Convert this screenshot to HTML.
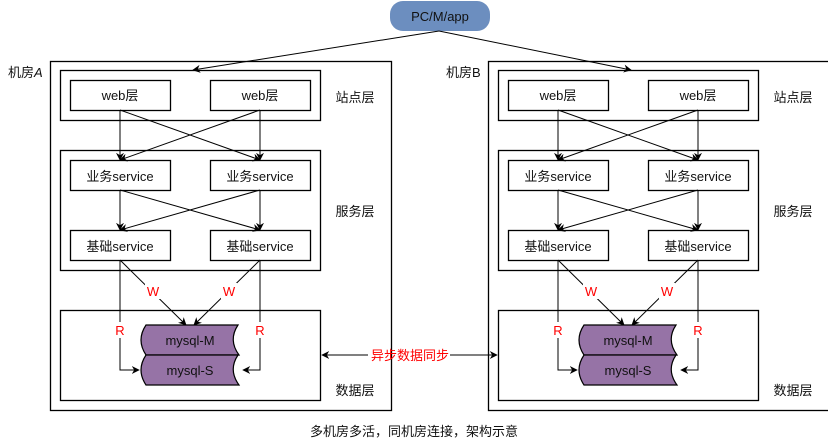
<!DOCTYPE html>
<html><head><meta charset="utf-8"><style>
html,body{margin:0;padding:0;background:#fff;}
svg{display:block;}
text{font-family:"Liberation Sans","Noto Sans CJK SC",sans-serif;font-size:13px;fill:#111;}
</style></head><body>
<svg width="828" height="441" viewBox="0 0 828 441" xmlns="http://www.w3.org/2000/svg">
<defs>
<marker id="ar" viewBox="0 0 10 10" refX="9" refY="5" markerWidth="8" markerHeight="8" orient="auto-start-reverse" markerUnits="userSpaceOnUse"><path d="M0,0 L10,5 L0,10 L3,5 z" fill="#000"/></marker>
<g id="room">
<rect x="50.5" y="61.5" width="341" height="349" fill="none" stroke="#000" stroke-width="1.3"/>
<rect x="60.5" y="70.5" width="260" height="50" fill="none" stroke="#000" stroke-width="1.3"/>
<rect x="70.5" y="80.5" width="100" height="30" fill="#fff" stroke="#000" stroke-width="1.3"/>
<rect x="210.5" y="80.5" width="100" height="30" fill="#fff" stroke="#000" stroke-width="1.3"/>
<text x="120" y="100" text-anchor="middle">web层</text>
<text x="260" y="100" text-anchor="middle">web层</text>
<text x="355" y="102" text-anchor="middle">站点层</text>
<rect x="60.5" y="150.5" width="260" height="120" fill="none" stroke="#000" stroke-width="1.3"/>
<rect x="70.5" y="160.5" width="100" height="30" fill="#fff" stroke="#000" stroke-width="1.3"/>
<rect x="210.5" y="160.5" width="100" height="30" fill="#fff" stroke="#000" stroke-width="1.3"/>
<text x="120" y="181" text-anchor="middle">业务service</text>
<text x="260" y="181" text-anchor="middle">业务service</text>
<rect x="70.5" y="230.5" width="100" height="30" fill="#fff" stroke="#000" stroke-width="1.3"/>
<rect x="210.5" y="230.5" width="100" height="30" fill="#fff" stroke="#000" stroke-width="1.3"/>
<text x="120" y="251" text-anchor="middle">基础service</text>
<text x="260" y="251" text-anchor="middle">基础service</text>
<text x="355" y="216" text-anchor="middle">服务层</text>
<g stroke="#000" stroke-width="1" fill="none" marker-end="url(#ar)">
<line x1="120" y1="110" x2="120" y2="160"/><line x1="120" y1="110" x2="260" y2="160"/>
<line x1="260" y1="110" x2="120" y2="160"/><line x1="260" y1="110" x2="260" y2="160"/>
<line x1="120" y1="190" x2="120" y2="230"/><line x1="120" y1="190" x2="260" y2="230"/>
<line x1="260" y1="190" x2="120" y2="230"/><line x1="260" y1="190" x2="260" y2="230"/>
<path d="M120,260 L186,325"/><path d="M260,260 L194,325"/>
<path d="M120,260 V370 H139"/><path d="M260,260 V370 H243"/>
</g>
<rect x="60.5" y="310.5" width="260" height="90" fill="none" stroke="#000" stroke-width="1.3"/>
<rect x="145" y="283" width="16" height="16" fill="#fff"/><rect x="221" y="283" width="16" height="16" fill="#fff"/>
<rect x="114" y="322" width="12" height="16" fill="#fff"/><rect x="254" y="322" width="12" height="16" fill="#fff"/>
<text x="153" y="296" text-anchor="middle" style="fill:#f00">W</text>
<text x="229" y="296" text-anchor="middle" style="fill:#f00">W</text>
<text x="120" y="335" text-anchor="middle" style="fill:#f00">R</text>
<text x="260" y="335" text-anchor="middle" style="fill:#f00">R</text>
<path d="M146,325 L238,325 Q228,340 239,355 L146,355 Q136,340 146,325 Z" fill="#9673a6" stroke="#000" stroke-width="1.2"/>
<path d="M146,355 L238,355 Q228,370 239,385 L146,385 Q136,370 146,355 Z" fill="#9673a6" stroke="#000" stroke-width="1.2"/>
<text x="190" y="345" text-anchor="middle">mysql-M</text>
<text x="190" y="375" text-anchor="middle">mysql-S</text>
<text x="355" y="395" text-anchor="middle">数据层</text>
</g>
</defs>
<use href="#room"/>
<use href="#room" x="438"/>
<text x="8" y="77">机房<tspan font-style="italic">A</tspan></text>
<text x="446" y="77">机房B</text>
<rect x="390" y="1" width="100" height="30" rx="13" fill="#6c8ebf"/>
<text x="440" y="21" text-anchor="middle">PC/M/app</text>
<g stroke="#000" stroke-width="1" fill="none" marker-end="url(#ar)">
<path d="M439,31 L193,70"/><path d="M439,31 L631,70"/>
<path d="M368,355 H322"/><path d="M450,355 H497"/>
</g>
<text x="410" y="360" text-anchor="middle" style="fill:#f00">异步数据同步</text>
<text x="414" y="436" text-anchor="middle">多机房多活，同机房连接，架构示意</text>
</svg>
</body></html>
